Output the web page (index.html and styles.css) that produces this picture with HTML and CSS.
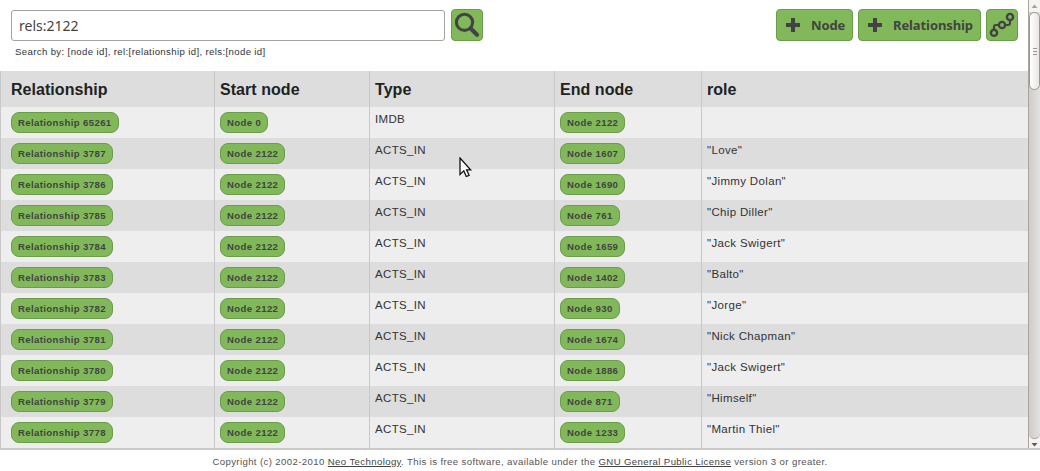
FILE: index.html
```html
<!DOCTYPE html>
<html lang="en">
<head>
<meta charset="utf-8">
<title>Data browser</title>
<link rel="stylesheet" href="styles.css">
</head>
<body>
<div class="workarea">
  <main class="content">
    <header class="toolbar">
      <div class="search">
        <div class="search-row">
          <input class="search-input" type="text" value="rels:2122" aria-label="Search">
          <button class="btn btn-icon" aria-label="Search">
            <svg width="30" height="30" viewBox="0 0 30 30" fill="none" stroke="#434343"><circle cx="12.5" cy="12.3" r="8.1" stroke-width="3.1"/><path d="M18.7 18.5L25 24.7" stroke-width="4.2" stroke-linecap="round"/></svg>
          </button>
        </div>
        <p class="hint">Search by: [node id], rel:[relationship id], rels:[node id]</p>
      </div>
      <div class="actions">
        <button class="btn btn-node"><svg class="plus" width="14" height="14" viewBox="0 0 14 14"><path d="M5 0h4v5h5v4H9v5H5V9H0V5h5z" fill="#434343"/></svg><span>Node</span></button>
        <button class="btn btn-rel"><svg class="plus" width="14" height="14" viewBox="0 0 14 14"><path d="M5 0h4v5h5v4H9v5H5V9H0V5h5z" fill="#434343"/></svg><span>Relationship</span></button>
        <button class="btn btn-icon" aria-label="Visualize">
          <svg width="30" height="30" viewBox="0 0 30 30" fill="none" stroke="#434343" stroke-width="2.4"><circle cx="7" cy="22.8" r="3.1"/><circle cx="15" cy="15" r="3.1"/><circle cx="23" cy="7" r="3.1"/><path d="M7 19.5V17Q7 15 9 15h2.8M18.2 15H21q2 0 2-2v-2.8" stroke-width="2.1"/></svg>
        </button>
      </div>
    </header>
    <table class="data">
      <colgroup><col class="c-rel"><col class="c-start"><col class="c-type"><col class="c-end"><col></colgroup>
      <thead><tr><th>Relationship</th><th>Start node</th><th>Type</th><th>End node</th><th>role</th></tr></thead>
      <tbody>
        <tr><td><a class="tag">Relationship 65261</a></td><td><a class="tag">Node 0</a></td><td>IMDB</td><td><a class="tag">Node 2122</a></td><td></td></tr>
        <tr><td><a class="tag">Relationship 3787</a></td><td><a class="tag">Node 2122</a></td><td>ACTS_IN</td><td><a class="tag">Node 1607</a></td><td>"Love"</td></tr>
        <tr><td><a class="tag">Relationship 3786</a></td><td><a class="tag">Node 2122</a></td><td>ACTS_IN</td><td><a class="tag">Node 1690</a></td><td>"Jimmy Dolan"</td></tr>
        <tr><td><a class="tag">Relationship 3785</a></td><td><a class="tag">Node 2122</a></td><td>ACTS_IN</td><td><a class="tag">Node 761</a></td><td>"Chip Diller"</td></tr>
        <tr><td><a class="tag">Relationship 3784</a></td><td><a class="tag">Node 2122</a></td><td>ACTS_IN</td><td><a class="tag">Node 1659</a></td><td>"Jack Swigert"</td></tr>
        <tr><td><a class="tag">Relationship 3783</a></td><td><a class="tag">Node 2122</a></td><td>ACTS_IN</td><td><a class="tag">Node 1402</a></td><td>"Balto"</td></tr>
        <tr><td><a class="tag">Relationship 3782</a></td><td><a class="tag">Node 2122</a></td><td>ACTS_IN</td><td><a class="tag">Node 930</a></td><td>"Jorge"</td></tr>
        <tr><td><a class="tag">Relationship 3781</a></td><td><a class="tag">Node 2122</a></td><td>ACTS_IN</td><td><a class="tag">Node 1674</a></td><td>"Nick Chapman"</td></tr>
        <tr><td><a class="tag">Relationship 3780</a></td><td><a class="tag">Node 2122</a></td><td>ACTS_IN</td><td><a class="tag">Node 1886</a></td><td>"Jack Swigert"</td></tr>
        <tr><td><a class="tag">Relationship 3779</a></td><td><a class="tag">Node 2122</a></td><td>ACTS_IN</td><td><a class="tag">Node 871</a></td><td>"Himself"</td></tr>
        <tr><td><a class="tag">Relationship 3778</a></td><td><a class="tag">Node 2122</a></td><td>ACTS_IN</td><td><a class="tag">Node 1233</a></td><td>"Martin Thiel"</td></tr>
      </tbody>
    </table>
  </main>
  <div class="scrollbar">
    <svg class="arrow" width="11" height="12" viewBox="0 0 11 12"><path d="M2.5 8l3-3.5 3 3.5z" fill="#a5a3a0"/></svg>
    <div class="track">
      <div class="thumb"><i></i><i></i><i></i></div>
    </div>
    <svg class="arrow" width="11" height="9" viewBox="0 0 11 9"><path d="M2.5 4h6l-3 3.5z" fill="#5c5b59"/></svg>
  </div>
</div>
<footer class="footer">Copyright (c) 2002-2010 <a>Neo Technology</a>. This is free software, available under the <a>GNU General Public License</a> version 3 or greater.</footer>
<svg class="cursor" width="14" height="22" viewBox="0 0 14 22"><path d="M1 1v16.5l3.8-3.6 2.5 5.6 2.8-1.2-2.5-5.5h4z" fill="#fff" stroke="#111" stroke-width="1.3"/></svg>
</body>
</html>
```
FILE: styles.css
```css
* { box-sizing: border-box; }
body {
  margin: 0;
  height: 471px;
  overflow: hidden;
  background: #fff;
  color: #333;
  font-family: "Liberation Sans", Arial, sans-serif;
}
.workarea {
  display: flex;
  height: 450px;
  border-bottom: 2px solid #cbcbcb;
}
.content { flex: 1; overflow: hidden; }
.toolbar {
  display: flex;
  justify-content: space-between;
  height: 71px;
  padding: 9px 10px 0 11px;
}
.search-row { display: flex; gap: 6px; }
.search-input {
  width: 434px;
  height: 31px;
  margin-top: 1px;
  padding: 0 7px 1px;
  border: 1px solid #a6a29e;
  border-radius: 3px;
  background: #fff;
  color: #434343;
  font: 14px "Noto Sans", sans-serif;
  outline: none;
}
.hint {
  margin: 4px 0 0 4px;
  font-size: 9.6px;
  letter-spacing: 0.37px;
  line-height: 14px;
}
.actions { display: flex; gap: 5px; }
.btn {
  display: flex;
  align-items: center;
  height: 32px;
  padding: 0;
  border: 1px solid #6b9c4a;
  border-radius: 4px;
  background: #81b95a;
  color: #434343;
  font: bold 13px "Noto Sans", sans-serif;
  letter-spacing: -0.1px;
}
.btn-icon { width: 32px; }
.btn-node { width: 77px; padding-left: 9px; gap: 11px; }
.btn-rel { width: 123px; padding-left: 9px; gap: 11px; }
.plus { flex: none; }
.data {
  width: 100%;
  table-layout: fixed;
  border-collapse: separate;
  border-spacing: 0;
}
.c-rel { width: 214px; }
.c-start { width: 155px; }
.c-type { width: 185px; }
.c-end { width: 147px; }
th, td {
  border-left: 1px solid #c8c8c8;
  text-align: left;
  vertical-align: top;
}
th {
  height: 36px;
  padding: 9px 5px 0;
  background: #ddd;
  color: #222;
  font-size: 16px;
  letter-spacing: 0.05px;
  line-height: 19px;
}
td {
  height: 31px;
  padding: 5px 5px 0;
  font-size: 11.5px;
  letter-spacing: 0.34px;
  line-height: 14px;
}
th:first-child, td:first-child { padding-left: 10px; }
tbody tr { background: #eee; }
tbody tr:nth-child(even) { background: #ddd; }
.tag {
  display: inline-block;
  height: 21px;
  padding: 0 6px;
  border: 1px solid #6b9c4a;
  border-radius: 8px;
  background: #81b95a;
  color: #434343;
  font-size: 9.6px;
  font-weight: bold;
  letter-spacing: 0.37px;
  line-height: 20px;
  vertical-align: top;
}
.scrollbar {
  display: flex;
  flex-direction: column;
  width: 12px;
  border-left: 1px solid #aaa49d;
  background: #f4f3f2;
}
.arrow { flex: none; }
.track {
  flex: 1;
  border-radius: 0 0 7px 7px;
  border-bottom: 1px solid #aaa49d;
  background: linear-gradient(90deg, #cfccc9, #e3e1df);
}
.thumb {
  display: flex;
  flex-direction: column;
  align-items: center;
  justify-content: center;
  gap: 2px;
  height: 78px;
  border: 1px solid #9c9891;
  border-radius: 6px;
  background: linear-gradient(90deg, #fff, #e8e7e6);
}
.thumb i { width: 4px; height: 1px; background: #9c9891; }
.footer {
  padding-top: 5px;
  color: #555;
  font-size: 9.6px;
  letter-spacing: 0.385px;
  line-height: 14px;
  text-align: center;
}
.footer a { text-decoration: underline; color: #444; }
.cursor { position: absolute; left: 459px; top: 157px; }
```
